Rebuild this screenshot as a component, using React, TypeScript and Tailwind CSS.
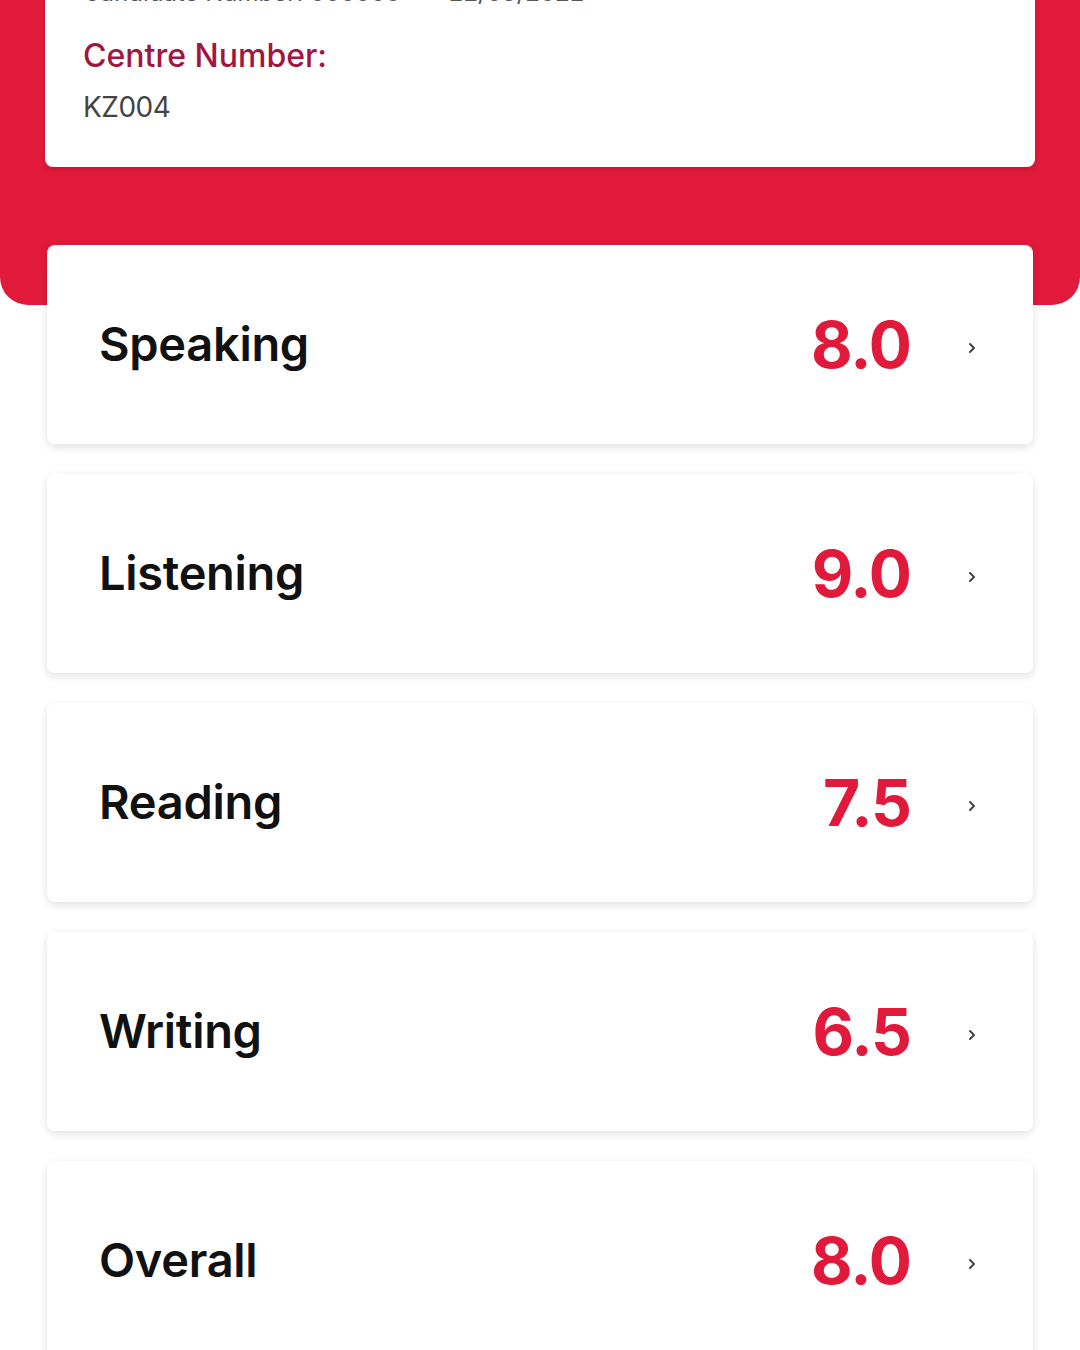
import React from "react";

const scores = [
  { label: "Speaking", value: "8.0" },
  { label: "Listening", value: "9.0" },
  { label: "Reading", value: "7.5" },
  { label: "Writing", value: "6.5" },
  { label: "Overall", value: "8.0" },
];

const App = () => {
  return (
    <div className="w-full min-h-screen bg-white overflow-hidden font-['Inter',sans-serif]">
      {/* red header with candidate details */}
      <div className="bg-[#e1193a] px-[45px] pb-[138px] rounded-b-[28px]">
        <div className="bg-white rounded-b-lg px-[38px] pb-[42px] shadow-[0_2px_4px_rgba(0,0,0,0.15)]">
          <div className="-mt-[21px] flex gap-[48px] text-[24px] leading-[28px] text-[#555]">
            <span>Candidate Number: 000000</span>
            <span>22/03/2022</span>
          </div>
          <p className="mt-[28px] text-[32px] leading-[42px] font-medium text-[#a0163f]">
            Centre Number:
          </p>
          <p className="mt-[12px] text-[28px] leading-[36px] text-[#444] tracking-[-0.5px]">KZ004</p>
        </div>
      </div>

      {/* score cards */}
      <div className="px-[47px] -mt-[60px] flex flex-col gap-[30px]">
        {scores.map((s) => (
          <div
            key={s.label}
            className="h-[199px] bg-white rounded-lg flex items-center pl-[52px] pr-[56px] shadow-[0_3px_10px_rgba(0,0,0,0.12)]"
          >
            <span className="flex-1 text-[47px] font-semibold tracking-[-0.3px] text-[#111]">{s.label}</span>
            <span className="text-[64px] font-bold text-[#e1193a] leading-none tracking-[-1px]">{s.value}</span>
            <svg
              className="ml-[56px] mt-[6px]"
              width="10"
              height="14"
              viewBox="0 0 10 14"
              fill="none"
              stroke="#444"
              strokeWidth="2"
              strokeLinecap="round"
              strokeLinejoin="round"
            >
              <path d="M3 3l4 4-4 4" />
            </svg>
          </div>
        ))}
      </div>
    </div>
  );
};

export default App;
